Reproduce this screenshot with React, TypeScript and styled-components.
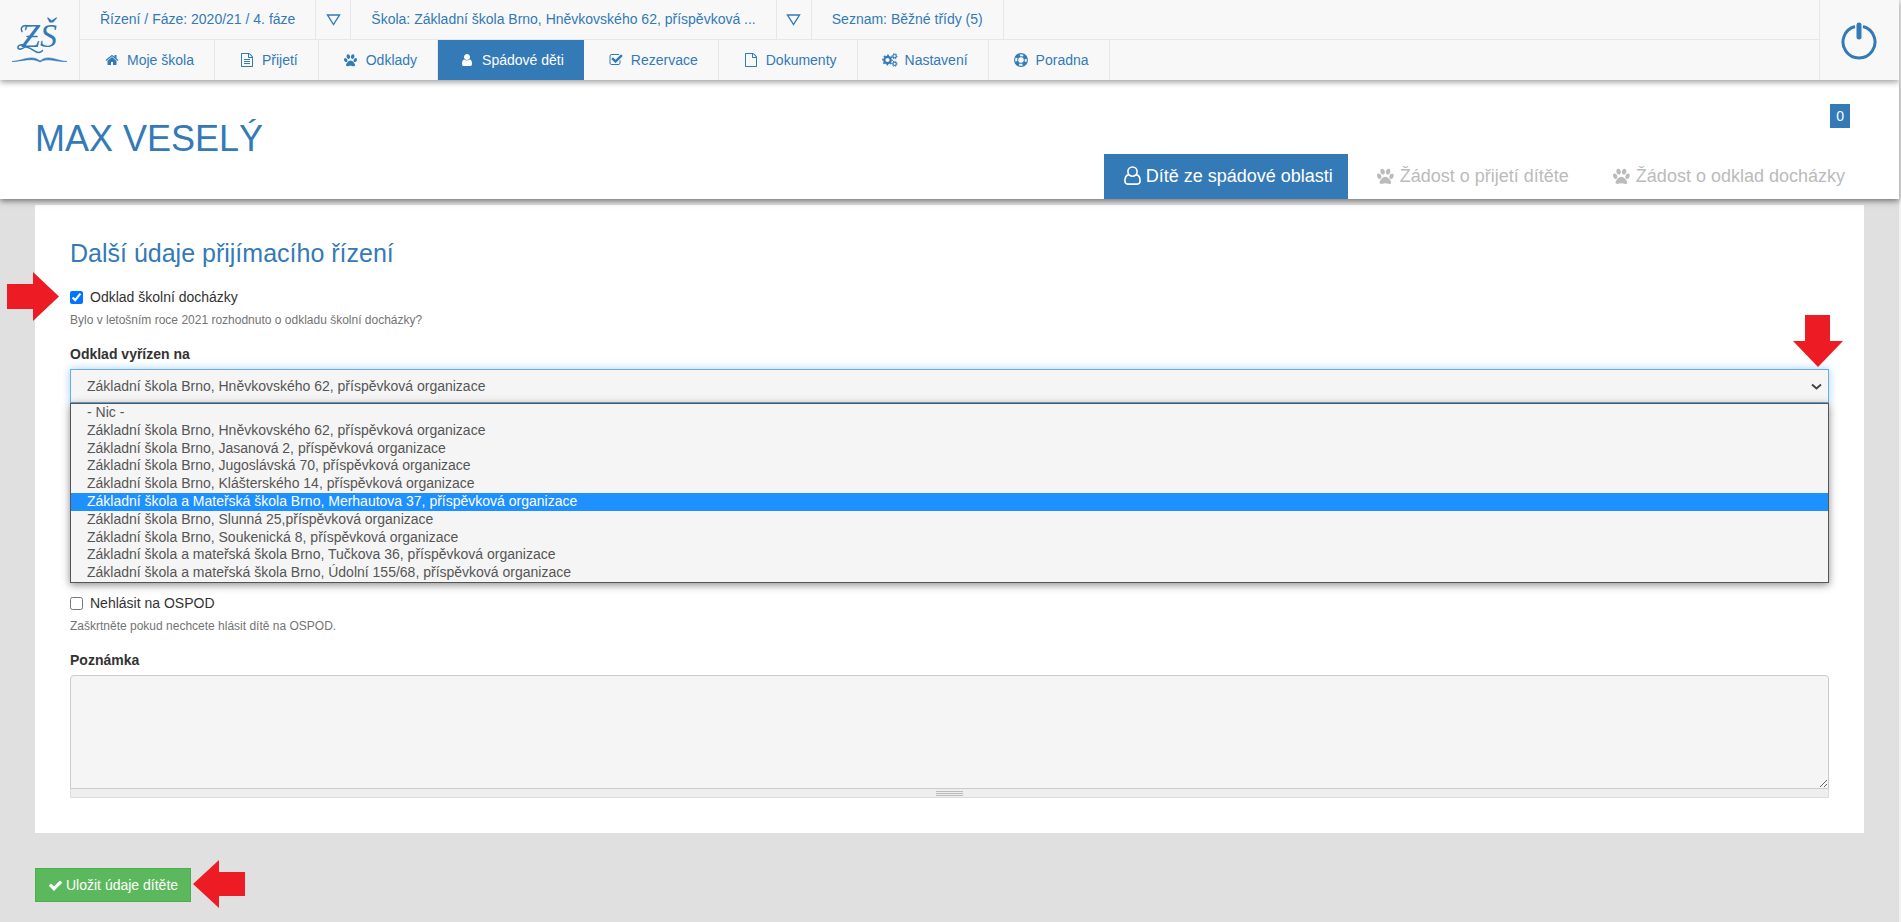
import React from "react";
import styled, { createGlobalStyle, css } from "styled-components";

const BLUE = "#337ab7";
const LINE = "#e7e7e7";

const GlobalStyle = createGlobalStyle`
  *, *::before, *::after { box-sizing: border-box; }
  html { background: #f1f1f1; }
  body {
    margin: 0;
    font: 14px/20px "Liberation Sans", Arial, sans-serif;
    color: #333;
  }
  a { color: inherit; text-decoration: none; }
`;

const Page = styled.div`
  min-height: 100vh;
  margin-right: 2px;
  background: #e0e0e0;
`;

/* Top navigation */
const TopBar = styled.nav`
  position: relative;
  z-index: 2;
  display: flex;
  height: 80px;
  background: #f8f8f8;
  color: ${BLUE};
  box-shadow: 0 2px 6px rgba(0, 0, 0, 0.4);
`;
const LogoLink = styled.a`
  flex: none;
  width: 80px;
  border-right: 1px solid ${LINE};
`;
const Rows = styled.div`
  flex: 1;
  display: flex;
  flex-direction: column;
`;
const NavRow = styled.div<{ $divided?: boolean }>`
  display: flex;
  height: 40px;
  ${(p) => p.$divided && css`border-bottom: 1px solid ${LINE};`}
`;
const Crumb = styled.a`
  display: flex;
  align-items: center;
  padding: 0 20px 2px;
  border-right: 1px solid ${LINE};
`;
const Toggle = styled.button`
  display: flex;
  align-items: center;
  justify-content: center;
  width: 35px;
  padding: 0;
  border: 0;
  border-right: 1px solid ${LINE};
  background: none;
  color: inherit;
`;
const NavItem = styled.a<{ $active?: boolean }>`
  display: flex;
  align-items: center;
  gap: 6px;
  padding: 0 20px 0 23px;
  border-right: 1px solid ${LINE};
  ${(p) => p.$active && css`
    padding-left: 20px;
    border-right: 0;
    background: ${BLUE};
    color: #fff;
  `}
`;
const IconSlot = styled.span`
  display: flex;
  justify-content: center;
  width: 18px;
`;
const PowerButton = styled.button`
  flex: none;
  display: flex;
  align-items: center;
  justify-content: center;
  width: 80px;
  padding: 2px 2px 0 0;
  border: 0;
  border-left: 1px solid ${LINE};
  background: none;
  color: inherit;
`;

/* Child header */
const Header = styled.header`
  position: relative;
  z-index: 1;
  display: flex;
  justify-content: space-between;
  height: 119px;
  padding: 0 35px;
  background: #fff;
  box-shadow: 0 2px 6px rgba(0, 0, 0, 0.5);
`;
const Title = styled.h1`
  margin: 39px 0 0;
  font-size: 36px;
  line-height: 40px;
  font-weight: 400;
  color: ${BLUE};
`;
const HeaderSide = styled.div`
  display: flex;
  flex-direction: column;
  justify-content: space-between;
  align-items: flex-end;
  padding-top: 24px;
`;
const Badge = styled.span`
  margin-right: 14px;
  padding: 2px 6px;
  background: ${BLUE};
  color: #fff;
`;
const Tabs = styled.div`
  display: flex;
  gap: 9px;
  padding-right: 4px;
`;
const Tab = styled.a<{ $active?: boolean }>`
  display: flex;
  align-items: center;
  gap: 5px;
  height: 45px;
  padding: 0 15px 2px 20px;
  font-size: 18px;
  color: #bbb;
  ${(p) => p.$active && css`
    background: ${BLUE};
    color: #fff;
  `}
`;

/* Form */
const Form = styled.form`
  padding: 6px 35px 20px;
`;
const Card = styled.section`
  padding: 34px 35px 35px;
  background: #fff;
`;
const SectionTitle = styled.h2`
  margin: 0 0 20px;
  font-size: 25px;
  line-height: 28px;
  font-weight: 400;
  color: ${BLUE};
`;
const CheckRow = styled.div`
  position: relative;
  display: flex;
  align-items: center;
  gap: 7px;
`;
const Checkbox = styled.input`
  width: 13px;
  height: 13px;
  margin: 0;
`;
const Help = styled.p`
  margin: 4px 0 15px;
  font-size: 12px;
  line-height: 18px;
  color: #737373;
`;
const Label = styled.label`
  display: block;
  margin-bottom: 5px;
  font-weight: 700;
`;
const Field = styled.div`
  position: relative;
  margin-bottom: 10px;
`;
const SelectBox = styled.div`
  position: relative;
`;
const Select = styled.select`
  appearance: none;
  display: block;
  width: 100%;
  height: 34px;
  padding: 6px 24px 6px 16px;
  border: 1px solid #66afe9;
  border-radius: 0;
  outline: 0;
  background-color: #f5f5f5;
  color: #555;
  font: inherit;
  box-shadow: 0 0 8px rgba(102, 175, 233, 0.6);
`;
const Chevron = styled.svg`
  position: absolute;
  right: 7px;
  top: 14px;
  pointer-events: none;
`;
const Options = styled.ul`
  position: relative;
  display: grid;
  grid-auto-rows: 1fr;
  height: 180px;
  margin: 0;
  padding: 0;
  border: 1px solid #555;
  background: #f5f5f5;
  color: #555;
  line-height: 17px;
  list-style: none;
  box-shadow: 0 2px 8px rgba(0, 0, 0, 0.45);
`;
const Option = styled.li<{ $active?: boolean }>`
  padding: 0 16px;
  ${(p) => p.$active && css`
    background: #1e90ff;
    color: #fff;
  `}
`;
const Note = styled.textarea`
  display: block;
  width: 100%;
  height: 114px;
  padding: 6px 12px;
  border: 1px solid #ccc;
  border-radius: 4px 4px 0 0;
  background: #f5f5f5;
  font: inherit;
  resize: vertical;
`;
const Grip = styled.div`
  display: flex;
  justify-content: center;
  padding-top: 2px;
  height: 9px;
  border: 1px solid #ddd;
  border-top: 0;
  background: #eee;
`;
const GripLines = styled.span`
  width: 27px;
  height: 5px;
  background: repeating-linear-gradient(#bbb 0 1px, #eee 1px 2px);
`;
const Actions = styled.div`
  display: flex;
  padding-top: 35px;
`;
const SaveWrap = styled.div`
  position: relative;
`;
const SaveButton = styled.button`
  display: flex;
  align-items: center;
  gap: 3px;
  height: 34px;
  padding: 0 12px;
  border: 1px solid #4cae4c;
  background: #5cb85c;
  color: #fff;
  font: inherit;
  white-space: nowrap;
`;

/* Red pointer laid over the page beside a control */
const Pointer = styled.svg<{ $place: "check" | "select" | "save" }>`
  position: absolute;
  z-index: 3;
  fill: #ed1c24;
  ${(p) => p.$place === "check" && css`left: -63px; top: -15px;`}
  ${(p) => p.$place === "select" && css`right: -14px; top: -29px;`}
  ${(p) => p.$place === "save" && css`left: calc(100% + 2px); top: -8px;`}
`;

const paths = {
  home: "M1472 992v480q0 26-19 45t-45 19h-384v-384h-256v384h-384q-26 0-45-19t-19-45v-480q0-1 .5-3t.5-3l575-474 575 474q1 2 1 6zm223-69l-62 74q-8 9-21 11h-3q-13 0-21-7l-692-577-692 577q-12 8-24 7-13-2-21-11l-62-74q-8-10-7-23.5t11-21.5l719-599q32-26 76-26t76 26l244 204v-195q0-14 9-23t23-9h192q14 0 23 9t9 23v408l219 182q10 8 11 21.5t-7 23.5z",
  file: "M1596 380q28 28 48 76t20 88v1152q0 40-28 68t-68 28h-1344q-40 0-68-28t-28-68v-1600q0-40 28-68t68-28h896q40 0 88 20t76 48zm-444-244v376h376q-10-29-22-41l-313-313q-12-12-41-22zm384 1528v-1024h-416q-40 0-68-28t-28-68v-416h-768v1536h1280z",
  fileLines: "M512 800q0-14 9-23t23-9h704q14 0 23 9t9 23v64q0 14-9 23t-23 9h-704q-14 0-23-9t-9-23v-64zm736 224q14 0 23 9t9 23v64q0 14-9 23t-23 9h-704q-14 0-23-9t-9-23v-64q0-14 9-23t23-9h704zm0 256q14 0 23 9t9 23v64q0 14-9 23t-23 9h-704q-14 0-23-9t-9-23v-64q0-14 9-23t23-9h704z",
  paw: "M780 508q0 60-19 113.5t-63 92.5-105 39q-76 0-138-57.5t-92-135.5-30-151q0-60 19-113.5t63-92.5 105-39q77 0 138.5 57.5t91.5 135 30 151.5zm-342 483q0 80-42 139t-119 59q-76 0-141.5-55.5t-100.5-133.5-35-152q0-80 42-139.5t119-59.5q76 0 141.5 55.5t100.5 134 35 152.5zm394-27q118 0 255 97.5t229 237 92 254.5q0 46-17 76.5t-48.5 45-64.5 20-76 5.5q-68 0-187.5-45t-182.5-45q-66 0-192.5 44.5t-200.5 44.5q-183 0-183-146 0-86 56-191.5t139.5-192.5 187.5-146 193-59zm239-211q-61 0-105-39t-63-92.5-19-113.5q0-74 30-151.5t91.5-135 138.5-57.5q61 0 105 39t63 92.5 19 113.5q0 73-30 151t-92 135.5-138 57.5zm432-104q77 0 119 59.5t42 139.5q0 74-35 152t-100.5 133.5-141.5 55.5q-77 0-119-59t-42-139q0-74 35-152.5t100.5-134 141.5-55.5z",
  user: "M1536 1399q0 109-62.5 187t-150.5 78h-854q-88 0-150.5-78t-62.5-187q0-85 8.5-160.5t31.5-152 58.5-131 94-89 134.5-34.5q131 128 313 128t313-128q76 0 134.5 34.5t94 89 58.5 131 31.5 152 8.5 160.5zm-256-887q0 159-112.5 271.5t-271.5 112.5-271.5-112.5-112.5-271.5 112.5-271.5 271.5-112.5 271.5 112.5 112.5 271.5z",
  checkSquare: "M1472 930v318q0 119-84.5 203.5t-203.5 84.5h-832q-119 0-203.5-84.5t-84.5-203.5v-832q0-119 84.5-203.5t203.5-84.5h832q63 0 117 25 15 7 18 23 3 17-9 29l-49 49q-10 10-23 10-3 0-9-2-23-6-45-6h-832q-66 0-113 47t-47 113v832q0 66 47 113t113 47h832q66 0 113-47t47-113v-254q0-13 9-22l64-64q10-10 23-10 6 0 12 3 20 8 20 29zm231-489l-814 814q-24 24-57 24t-57-24l-430-430q-24-24-24-57t24-57l110-110q24-24 57-24t57 24l263 263 647-647q24-24 57-24t57 24l110 110q24 24 24 57t-24 57z",
  check: "M1671 566q0 40-28 68l-724 724-136 136q-28 28-68 28t-68-28l-136-136-362-362q-28-28-28-68t28-68l136-136q28-28 68-28t68 28l294 295 656-657q28-28 68-28t68 28l136 136q28 28 28 68z",
};

const Glyph = ({ d, size = 14 }: { d: string; size?: number }) => (
  <svg width={size} height={size} viewBox="0 0 1792 1792" fill="currentColor" aria-hidden="true">
    <path d={d} />
  </svg>
);

const Cogs = () => (
  <svg width="16" height="14" viewBox="0 0 16 14" fill="none" stroke="currentColor" aria-hidden="true">
    <circle cx="5.5" cy="7" r="3.2" strokeWidth="2.2" />
    <circle cx="5.5" cy="7" r="4.7" strokeWidth="1.4" strokeDasharray="1.85 1.841" strokeDashoffset=".92" />
    <circle cx="12.6" cy="3.2" r="1.7" strokeWidth="1.2" />
    <circle cx="12.6" cy="3.2" r="2.6" strokeWidth="1" strokeDasharray="1.36 1.363" strokeDashoffset=".68" />
    <circle cx="12.6" cy="10.8" r="1.7" strokeWidth="1.2" />
    <circle cx="12.6" cy="10.8" r="2.6" strokeWidth="1" strokeDasharray="1.36 1.363" strokeDashoffset=".68" />
  </svg>
);

const LifeRing = () => (
  <svg width="14" height="14" viewBox="0 0 14 14" fill="none" stroke="currentColor" aria-hidden="true">
    <circle cx="7" cy="7" r="6.4" strokeWidth="1.1" />
    <circle cx="7" cy="7" r="3.4" strokeWidth="1" />
    <circle cx="7" cy="7" r="4.9" strokeWidth="3" strokeDasharray="4.2 3.497" strokeDashoffset="-1.75" />
  </svg>
);

const UserOutline = () => (
  <svg width="17" height="19" viewBox="0 0 17 19" fill="none" stroke="currentColor" strokeWidth="1.6" aria-hidden="true">
    <circle cx="8.5" cy="5.6" r="4.6" />
    <path d="M4.9 8.6C2 9.2.9 12 .9 14.8c0 1.9 1.2 3.3 2.9 3.3h9.4c1.7 0 2.9-1.4 2.9-3.3 0-2.8-1.1-5.6-4-6.2" />
  </svg>
);

const Logo = () => (
  <svg width="79" height="80" viewBox="0 0 79 80" aria-label="ZŠ" role="img">
    <g fontFamily="Liberation Serif, serif" fontStyle="italic" fontSize="34" fill={BLUE}>
      <text x="21" y="47">Z</text>
      <text x="40" y="47">Š</text>
    </g>
    <g fill="none" stroke={BLUE} strokeWidth="1.6" strokeLinecap="round">
      <path d="M27 36.5h10" />
      <path d="M26 25.5c-4 0-6 3-4 6" />
      <path d="M25 46c-3-2-7-1-7 1.5s4 2 7-.5c5-1 10 6.500 14 5.500 2-.5 3-1 3.500-2" />
    </g>
    <path d="M12 61.5C22 61 32 54 40 61C48 54 57 61 67 61.5C57 62.5 48 57 40 62C32 57 22 61.5 12 61.5z" fill={BLUE} stroke={BLUE} strokeWidth=".6" />
  </svg>
);

const DownTriangle = () => (
  <svg width="15" height="12" viewBox="0 0 15 12" fill="none" stroke="currentColor" strokeWidth="1.4" aria-hidden="true">
    <path d="M1.5 1h12l-6 9.5z" />
  </svg>
);

const PowerIcon = () => (
  <svg width="36" height="38" viewBox="0 0 36 38" fill="none" stroke="currentColor" aria-hidden="true">
    <path d="M14 4.500a16 16 0 1 0 8 0" strokeWidth="3" />
    <path d="M18 3v12" strokeWidth="5" strokeLinecap="round" />
  </svg>
);

const navItems = [
  { label: "Moje škola", icon: <Glyph d={paths.home} /> },
  { label: "Přijetí", icon: <Glyph d={paths.file + paths.fileLines} /> },
  { label: "Odklady", icon: <Glyph d={paths.paw} /> },
  { label: "Spádové děti", icon: <Glyph d={paths.user} />, active: true },
  { label: "Rezervace", icon: <Glyph d={paths.checkSquare} /> },
  { label: "Dokumenty", icon: <Glyph d={paths.file} /> },
  { label: "Nastavení", icon: <Cogs /> },
  { label: "Poradna", icon: <LifeRing /> },
];

const schools = [
  "- Nic -",
  "Základní škola Brno, Hněvkovského 62, příspěvková organizace",
  "Základní škola Brno, Jasanová 2, příspěvková organizace",
  "Základní škola Brno, Jugoslávská 70, příspěvková organizace",
  "Základní škola Brno, Klášterského 14, příspěvková organizace",
  "Základní škola a Mateřská škola Brno, Merhautova 37, příspěvková organizace",
  "Základní škola Brno, Slunná 25,příspěvková organizace",
  "Základní škola Brno, Soukenická 8, příspěvková organizace",
  "Základní škola a mateřská škola Brno, Tučkova 36, příspěvková organizace",
  "Základní škola a mateřská škola Brno, Údolní 155/68, příspěvková organizace",
];

export default function App() {
  return (
    <>
      <GlobalStyle />
      <Page>
        <TopBar>
          <LogoLink href="#"><Logo /></LogoLink>
          <Rows>
            <NavRow $divided>
              <Crumb href="#">Řízení / Fáze: 2020/21 / 4. fáze</Crumb>
              <Toggle type="button" aria-label="Vybrat fázi"><DownTriangle /></Toggle>
              <Crumb href="#">Škola: Základní škola Brno, Hněvkovského 62, příspěvková ...</Crumb>
              <Toggle type="button" aria-label="Vybrat školu"><DownTriangle /></Toggle>
              <Crumb href="#">Seznam: Běžné třídy (5)</Crumb>
            </NavRow>
            <NavRow>
              {navItems.map((item) => (
                <NavItem key={item.label} href="#" $active={item.active}>
                  <IconSlot>{item.icon}</IconSlot>
                  {item.label}
                </NavItem>
              ))}
            </NavRow>
          </Rows>
          <PowerButton type="button" aria-label="Odhlásit"><PowerIcon /></PowerButton>
        </TopBar>

        <Header>
          <Title>MAX VESELÝ</Title>
          <HeaderSide>
            <Badge>0</Badge>
            <Tabs>
              <Tab href="#" $active><UserOutline />Dítě ze spádové oblasti</Tab>
              <Tab href="#"><Glyph d={paths.paw} size={18} />Žádost o přijetí dítěte</Tab>
              <Tab href="#"><Glyph d={paths.paw} size={18} />Žádost o odklad docházky</Tab>
            </Tabs>
          </HeaderSide>
        </Header>

        <Form>
          <Card>
            <SectionTitle>Další údaje přijímacího řízení</SectionTitle>
            <CheckRow>
              <Checkbox type="checkbox" id="deferral" defaultChecked />
              <label htmlFor="deferral">Odklad školní docházky</label>
              <Pointer $place="check" width="52" height="49" viewBox="0 0 52 49" aria-hidden="true">
                <path d="M0 12h26V0l26 24.5L26 49V37H0z" />
              </Pointer>
            </CheckRow>
            <Help>Bylo v letošním roce 2021 rozhodnuto o odkladu školní docházky?</Help>

            <Field>
              <Label htmlFor="school">Odklad vyřízen na</Label>
              <SelectBox>
                <Select id="school" defaultValue={schools[1]}>
                  {schools.map((name) => <option key={name}>{name}</option>)}
                </Select>
                <Chevron width="11" height="8" viewBox="0 0 11 8" fill="none" stroke="#444" strokeWidth="2" aria-hidden="true">
                  <path d="M1 1.5l4.500 4 4.500-4" />
                </Chevron>
              </SelectBox>
              <Options role="listbox" aria-label="Odklad vyřízen na">
                {schools.map((name, i) => (
                  <Option key={name} role="option" aria-selected={i === 5} $active={i === 5}>{name}</Option>
                ))}
              </Options>
              <Pointer $place="select" width="50" height="52" viewBox="0 0 50 52" aria-hidden="true">
                <path d="M12 0h25v26h13L25 52 0 26h12z" />
              </Pointer>
            </Field>

            <CheckRow>
              <Checkbox type="checkbox" id="ospod" />
              <label htmlFor="ospod">Nehlásit na OSPOD</label>
            </CheckRow>
            <Help>Zaškrtněte pokud nechcete hlásit dítě na OSPOD.</Help>

            <Label htmlFor="note">Poznámka</Label>
            <Note id="note" />
            <Grip><GripLines /></Grip>
          </Card>

          <Actions>
            <SaveWrap>
              <SaveButton type="button"><Glyph d={paths.check} size={15} />Uložit údaje dítěte</SaveButton>
              <Pointer $place="save" width="52" height="48" viewBox="0 0 52 48" aria-hidden="true">
                <path d="M0 24L26 0v12h26v24H26v12z" />
              </Pointer>
            </SaveWrap>
          </Actions>
        </Form>
      </Page>
    </>
  );
}
